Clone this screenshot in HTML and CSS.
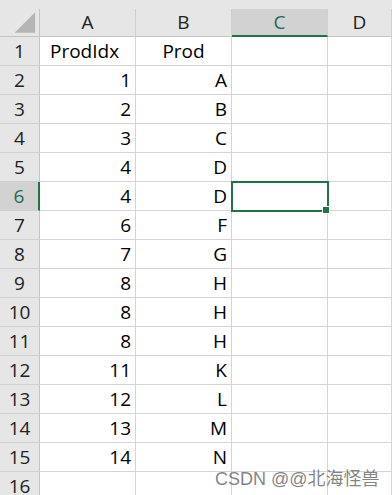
FILE: index.html
```html
<!DOCTYPE html>
<html lang="en">
<head>
<meta charset="UTF-8">
<title>Sheet1</title>
<link rel="stylesheet" href="styles.css">
</head>
<body>

<div class="sheet">
    <!-- column headers -->
    <div class="corner">
        <svg width="40" height="28" viewBox="0 0 40 28"><polygon points="15,25 36,4 36,25" fill="#b5b5b5"/></svg>
    </div>
    <div class="col-head">A</div>
    <div class="col-head">B</div>
    <div class="col-head active">C</div>
    <div class="col-head">D</div>

    <div class="row-head">1</div><div class="cell">ProdIdx</div><div class="cell center">Prod</div><div class="cell"></div><div class="cell"></div>
    <div class="row-head">2</div><div class="cell num">1</div><div class="cell num">A</div><div class="cell"></div><div class="cell"></div>
    <div class="row-head">3</div><div class="cell num">2</div><div class="cell num">B</div><div class="cell"></div><div class="cell"></div>
    <div class="row-head">4</div><div class="cell num">3</div><div class="cell num">C</div><div class="cell"></div><div class="cell"></div>
    <div class="row-head">5</div><div class="cell num">4</div><div class="cell num">D</div><div class="cell"></div><div class="cell"></div>
    <div class="row-head active">6</div><div class="cell num">4</div><div class="cell num">D</div><div class="cell selected"></div><div class="cell"></div>
    <div class="row-head">7</div><div class="cell num">6</div><div class="cell num">F</div><div class="cell"></div><div class="cell"></div>
    <div class="row-head">8</div><div class="cell num">7</div><div class="cell num">G</div><div class="cell"></div><div class="cell"></div>
    <div class="row-head">9</div><div class="cell num">8</div><div class="cell num">H</div><div class="cell"></div><div class="cell"></div>
    <div class="row-head">10</div><div class="cell num">8</div><div class="cell num">H</div><div class="cell"></div><div class="cell"></div>
    <div class="row-head">11</div><div class="cell num">8</div><div class="cell num">H</div><div class="cell"></div><div class="cell"></div>
    <div class="row-head">12</div><div class="cell num">11</div><div class="cell num">K</div><div class="cell"></div><div class="cell"></div>
    <div class="row-head">13</div><div class="cell num">12</div><div class="cell num">L</div><div class="cell"></div><div class="cell"></div>
    <div class="row-head">14</div><div class="cell num">13</div><div class="cell num">M</div><div class="cell"></div><div class="cell"></div>
    <div class="row-head">15</div><div class="cell num">14</div><div class="cell num">N</div><div class="cell"></div><div class="cell"></div>
    <div class="row-head">16</div><div class="cell"></div><div class="cell"></div><div class="cell"></div><div class="cell"></div>
</div>

<div class="watermark">CSDN @@北海怪兽</div>

</body>
</html>
```

FILE: styles.css
```css
body {
    margin: 0;
    padding: 9px 0 0;
    height: 495px;
    box-sizing: border-box;
    overflow: hidden;
    background: #e6e6e6;
    font-family: "Open Sans", "Noto Sans CJK SC", sans-serif;
    color: #000;
}
.sheet {
    display: grid;
    grid-template-columns: 40px 96px 96px 96px 1fr;
    grid-template-rows: 28px;
    grid-auto-rows: 29px;
    font-size: 19px;
}
.sheet > div {
    box-sizing: border-box;
    display: flex;
    align-items: flex-end;
    line-height: 24px;
    padding-bottom: 2px;
}
.corner {
    background: #e6e6e6;
    border-right: 1px solid #c4c4c4;
    border-bottom: 1px solid #c4c4c4;
    padding: 0 !important;
}
.corner svg {
    display: block;
}
.col-head {
    background: #e6e6e6;
    border-right: 1px solid #d0d0d0;
    border-bottom: 1px solid #c4c4c4;
    justify-content: center;
    color: #222;
}
.row-head {
    background: #e6e6e6;
    border-right: 1px solid #c4c4c4;
    border-bottom: 1px solid #d0d0d0;
    justify-content: center;
    color: #222;
}
.col-head.active {
    background: #d2d2d2;
    border-bottom: 2px solid #217346;
    color: #1e6b52;
    padding-bottom: 1px;
}
.row-head.active {
    background: #d2d2d2;
    border-right: 2px solid #217346;
    color: #1e6b52;
}
.cell {
    background: #fff;
    border-right: 1px solid #d4d4d4;
    border-bottom: 1px solid #d4d4d4;
    padding-left: 10px;
}
.cell.center {
    justify-content: center;
    padding-left: 0;
}
.cell.num {
    justify-content: flex-end;
    padding-left: 0;
    padding-right: 4px;
}
.cell.selected {
    position: relative;
}
.cell.selected::after {
    content: "";
    position: absolute;
    top: -1px;
    left: -1px;
    right: -2px;
    bottom: -2px;
    border: 2px solid #217346;
}
.cell.selected::before {
    content: "";
    position: absolute;
    right: -3px;
    bottom: -4px;
    width: 6px;
    height: 6px;
    background: #217346;
    border: 1px solid #fff;
    z-index: 2;
}
.watermark {
    position: absolute;
    left: 215px;
    top: 464px;
    font-family: "Liberation Sans", "Noto Sans CJK SC", sans-serif;
    font-size: 18px;
    color: rgba(110, 110, 110, 0.85);
}
```
